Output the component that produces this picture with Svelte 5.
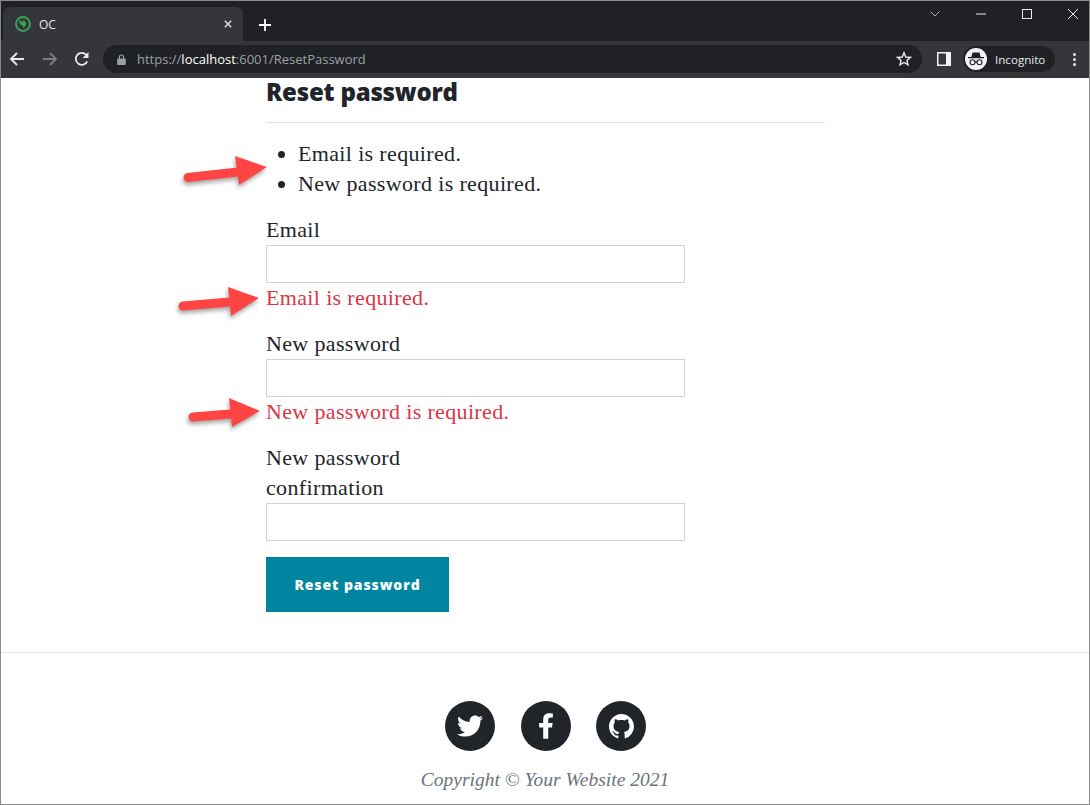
<script>
  const groups = [
    { label: 'Email', error: 'Email is required.' },
    { label: 'New password', error: 'New password is required.' },
    { label: 'New password confirmation', error: '' }
  ];
  const arrows = [
    { x1: 188, y1: 177.5, x2: 238, y2: 172, head: '235,156 267,167 239,185' },
    { x1: 183, y1: 306, x2: 230, y2: 302, head: '228,287 259,298 231,316' },
    { x1: 193, y1: 417, x2: 231, y2: 414, head: '229,398 260,411 232,427' }
  ];
</script>

<div class="window">
  <div class="titlebar">
    <div class="tab">
      <svg class="favicon" viewBox="0 0 16 16" aria-hidden="true">
        <circle cx="8" cy="8" r="7" fill="none" stroke="#34a853" stroke-width="1.8" />
        <path d="M4 4.500C6 4.800 7.300 5.800 7.800 7.400V4.600C9.600 4.800 10.800 5.800 11 7.400 11.200 9.400 9.800 11 8 11.400V9.600C6 9.500 4.300 7.500 4 4.500Z" fill="#34a853" />
      </svg>
      <span class="tab-title">OC</span>
      <svg class="tab-close" viewBox="0 0 10 10" aria-hidden="true"><path d="M1 1l8 8M9 1l-8 8" /></svg>
    </div>
    <svg class="new-tab" viewBox="0 0 12 12" aria-hidden="true"><path d="M6 0v12M0 6h12" /></svg>
    <div class="win-controls">
      <svg class="wc chevron" viewBox="0 0 10 6" aria-hidden="true"><path d="M.5.5 5 5 9.500.5" /></svg>
      <svg class="wc minimize" viewBox="0 0 10 2" aria-hidden="true"><path d="M0 1h10" /></svg>
      <svg class="wc maximize" viewBox="0 0 10 10" aria-hidden="true"><rect x=".5" y=".5" width="9" height="9" /></svg>
      <svg class="wc close" viewBox="0 0 10 10" aria-hidden="true"><path d="M0 0l10 10M10 0 0 10" /></svg>
    </div>
  </div>

  <div class="toolbar">
    <svg class="nav" viewBox="0 0 16 16" aria-hidden="true"><path d="M15 8H2M8 2 2 8l6 6" /></svg>
    <svg class="nav dim" viewBox="0 0 16 16" aria-hidden="true"><path d="M1 8h13M8 2l6 6-6 6" /></svg>
    <svg class="nav reload" viewBox="0 0 16 16" aria-hidden="true">
      <path d="M13.200 10.500A6 6 0 1 1 12.300 3.800" />
      <path class="solid" d="M14.500 1v6h-6z" />
    </svg>
    <div class="omnibox">
      <svg class="lock" viewBox="0 0 10 12" aria-hidden="true">
        <path d="M1 5h8a.8.8 0 0 1 .8.8v5.400a.8.8 0 0 1-.8.8H1a.8.8 0 0 1-.8-.8V5.800A.8.8 0 0 1 1 5z" />
        <path class="shackle" d="M2.700 5.500V3.300a2.300 2.300 0 0 1 4.600 0v2.200" />
      </svg>
      <span class="url">https://<b>localhost</b>:6001/ResetPassword</span>
      <svg class="star" viewBox="0 0 16 16" aria-hidden="true"><path d="M8 1.800 9.800 6l4.600.4-3.500 3 1.100 4.500L8 11.500l-4 2.400 1.100-4.500-3.500-3L6.200 6z" /></svg>
    </div>
    <svg class="sidepanel" viewBox="0 0 14 14" aria-hidden="true">
      <path fill-rule="evenodd" d="M0 0h14v14H0zM1.500 1.500v11H9v-11z" />
    </svg>
    <div class="profile">
      <span class="avatar">
        <svg viewBox="0 0 22 22" aria-hidden="true">
          <path d="M7.500 4.500h7l1.200 4.500H19v1.200H3V9h3.300z" />
          <circle class="glass" cx="7.500" cy="14.200" r="2.500" />
          <circle class="glass" cx="14.500" cy="14.200" r="2.500" />
          <path class="glass" d="M10 13.900h2" />
        </svg>
      </span>
      <span class="profile-name">Incognito</span>
    </div>
    <div class="kebab"><i></i><i></i><i></i></div>
  </div>

  <main>
    <h1>Reset password</h1>
    <ul>
      <li>Email is required.</li>
      <li>New password is required.</li>
    </ul>
    <form>
      {#each groups as g}
        <div class="group">
          <label>
            <span class="label-text">{g.label}</span>
            <input type="text" />
          </label>
          {#if g.error}<div class="error">{g.error}</div>{/if}
        </div>
      {/each}
      <button type="button">Reset password</button>
    </form>
  </main>

  <footer>
    <div class="social">
      <span class="circle">
        <svg class="i-tw" viewBox="0 0 512 512" aria-hidden="true"><path d="M459.37 151.716c.325 4.548.325 9.097.325 13.645 0 138.72-105.583 298.558-298.558 298.558-59.452 0-114.68-17.219-161.137-47.106 8.447.974 16.568 1.299 25.34 1.299 49.055 0 94.213-16.568 130.274-44.832-46.132-.975-84.792-31.188-98.112-72.772 6.498.974 12.995 1.624 19.818 1.624 9.421 0 18.843-1.3 27.614-3.573-48.081-9.747-84.143-51.98-84.143-102.985v-1.299c13.969 7.797 30.214 12.67 47.431 13.319-28.264-18.843-46.781-51.005-46.781-87.391 0-19.492 5.197-37.36 14.294-52.954 51.655 63.675 129.3 105.258 216.365 109.807-1.624-7.797-2.599-15.918-2.599-24.04 0-57.828 46.782-104.934 104.934-104.934 30.213 0 57.502 12.67 76.67 33.137 23.715-4.548 46.456-13.32 66.599-25.34-7.798 24.366-24.366 44.833-46.132 57.827 21.117-2.273 41.584-8.122 60.426-16.243-14.292 20.791-32.161 39.308-52.628 54.253z" /></svg>
      </span>
      <span class="circle">
        <svg class="i-fb" viewBox="0 0 320 512" aria-hidden="true"><path d="M279.14 288l14.22-92.66h-88.91v-60.13c0-25.35 12.42-50.06 52.24-50.06h40.42V6.26S260.43 0 225.36 0c-73.22 0-121.08 44.38-121.08 124.72v70.62H22.89V288h81.39v224h100.17V288z" /></svg>
      </span>
      <span class="circle">
        <svg class="i-gh" viewBox="0 0 16 16" aria-hidden="true"><path d="M8 0C3.58 0 0 3.58 0 8c0 3.54 2.29 6.53 5.47 7.59.4.07.55-.17.55-.38 0-.19-.01-.82-.01-1.49-2.01.37-2.53-.49-2.69-.94-.09-.23-.48-.94-.82-1.13-.28-.15-.68-.52-.01-.53.63-.01 1.08.58 1.23.82.72 1.21 1.87.87 2.33.66.07-.52.28-.87.51-1.07-1.78-.2-3.64-.89-3.64-3.95 0-.87.31-1.59.82-2.15-.08-.2-.36-1.02.08-2.12 0 0 .67-.21 2.2.82.64-.18 1.32-.27 2-.27.68 0 1.36.09 2 .27 1.53-1.04 2.2-.82 2.2-.82.44 1.1.16 1.92.08 2.12.51.56.82 1.27.82 2.15 0 3.07-1.87 3.75-3.65 3.95.29.25.54.73.54 1.48 0 1.07-.01 1.93-.01 2.2 0 .21.15.46.55.38A8.013 8.013 0 0016 8c0-4.42-3.58-8-8-8z" /></svg>
      </span>
    </div>
    <p class="copyright">Copyright © Your Website 2021</p>
  </footer>

  <svg class="annotations" viewBox="0 0 1090 805" aria-hidden="true">
    {#each arrows as a}
      <g class="arrow">
        <line x1={a.x1} y1={a.y1} x2={a.x2} y2={a.y2} />
        <polygon points={a.head} />
      </g>
    {/each}
  </svg>
</div>

<style>
  :global(body) { margin: 0; background: #fff; }
  .window {
    position: relative;
    box-sizing: border-box;
    width: 1090px;
    height: 805px;
    border: 1px solid #8a8a8a;
    overflow: hidden;
    font-family: "Liberation Serif", serif;
    color: #212529;
    display: flex;
    flex-direction: column;
  }
  .titlebar {
    height: 40px;
    flex: none;
    background: #202124;
    display: flex;
    align-items: flex-end;
    padding-left: 2px;
    position: relative;
  }
  .tab {
    width: 240px;
    height: 34px;
    background: #35363a;
    border-radius: 8px 8px 0 0;
    display: flex;
    align-items: center;
    box-sizing: border-box;
    padding: 0 11px 0 12px;
  }
  .favicon { width: 16px; height: 16px; flex: none; }
  .tab-title {
    margin-left: 8px;
    flex: 1;
    font: 12px "Open Sans", sans-serif;
    color: #e8eaed;
  }
  .tab-close { width: 8px; height: 8px; fill: none; stroke: #e8eaed; stroke-width: 1.6; }
  .new-tab {
    width: 12px; height: 12px;
    fill: none; stroke: #fff; stroke-width: 1.8;
    margin: 0 0 10px 16px;
  }
  .win-controls {
    margin-left: auto;
    align-self: flex-start;
    display: flex;
    align-items: center;
    height: 25px;
  }
  .wc { fill: none; stroke-width: 1; display: block; }
  .chevron { width: 10px; height: 6px; margin-right: 36px; stroke: #a8a9ab; }
  .minimize { width: 10px; height: 2px; margin-right: 36px; stroke: #e8eaed; }
  .maximize { width: 10px; height: 10px; margin-right: 36px; stroke: #e8eaed; }
  .close { width: 10px; height: 10px; margin-right: 11px; stroke: #e8eaed; }

  .toolbar {
    box-sizing: border-box;
    height: 37px;
    flex: none;
    background: #35363a;
    display: flex;
    align-items: center;
    padding: 0 0 1px 8px;
  }
  .nav {
    width: 16px; height: 16px;
    fill: none; stroke: #e8eaed; stroke-width: 1.8;
    margin-right: 16.500px;
    flex: none;
  }
  .nav.dim { stroke: #7c7d80; }
  .nav.reload { margin-right: 13px; }
  .nav .solid { fill: #e8eaed; stroke: none; }
  .omnibox {
    width: 819px;
    height: 28px;
    flex: none;
    background: #202124;
    border-radius: 14px;
    display: flex;
    align-items: center;
    padding-left: 14px;
    box-sizing: border-box;
  }
  .lock { width: 9px; height: 11px; fill: #9aa0a6; flex: none; }
  .lock .shackle { fill: none; stroke: #9aa0a6; stroke-width: 1.3; }
  .url {
    margin-left: 11px;
    font: 13px "Open Sans", sans-serif;
    color: #9aa0a6;
  }
  .url b { font-weight: 400; color: #fff; }
  .star {
    width: 16px; height: 16px;
    margin-left: auto; margin-right: 10px;
    fill: none; stroke: #e8eaed; stroke-width: 1.4;
  }
  .sidepanel { width: 14px; height: 14px; fill: #f1f3f4; margin-left: 15px; flex: none; }
  .profile {
    width: 92px;
    height: 26px;
    margin-left: 12px;
    background: #202124;
    border-radius: 13px;
    display: flex;
    align-items: center;
    flex: none;
  }
  .avatar {
    width: 22px; height: 22px;
    border-radius: 50%;
    background: #f1f3f4;
    margin-left: 2px;
    flex: none;
    display: block;
  }
  .avatar svg { display: block; width: 22px; height: 22px; fill: #202124; }
  .avatar .glass { fill: none; stroke: #202124; stroke-width: 1.1; }
  .profile-name { margin-left: 8px; font: 11.600px "Open Sans", sans-serif; color: #e8eaed; }
  .kebab {
    margin-left: 18px;
    display: flex;
    flex-direction: column;
    gap: 2px;
  }
  .kebab i { display: block; width: 3px; height: 3px; border-radius: 50%; background: #e8eaed; }

  main { margin-left: 265px; width: 559px; flex: none; }
  h1 {
    margin: 0;
    font: 800 24px/28px "Open Sans", sans-serif;
    letter-spacing: -0.2px;
    padding: 0 0 16px;
    border-bottom: 1px solid #dee2e6;
    color: #212529;
  }
  ul {
    margin: 16px 0;
    padding-left: 32px;
    line-height: 30px;
  }
  .group { width: 419px; margin-bottom: 16px; line-height: 30px; }
  .label-text { display: block; width: 160px; }
  input {
    display: block;
    box-sizing: border-box;
    width: 100%;
    height: 38px;
    border: 1px solid #ced4da;
    background: #fff;
    padding: 0;
    margin: 0;
    outline: none;
  }
  .error { color: #dc3545; }
  ul, .label-text, .error { font-size: 22px; letter-spacing: 0.35px; }
  button {
    display: block;
    width: 183px;
    height: 55px;
    border: 0;
    padding: 0;
    background: #0085a1;
    color: #fff;
    font: 800 14px "Open Sans", sans-serif;
    letter-spacing: 0.9px;
  }
  footer {
    margin-top: 40px;
    flex: 1;
    border-top: 1px solid #dee2e6;
    padding-top: 48px;
    display: flex;
    flex-direction: column;
    align-items: center;
  }
  .social { display: flex; gap: 25.500px; margin-left: 1.500px; }
  .circle {
    width: 50px; height: 50px;
    border-radius: 50%;
    background: #212529;
    display: flex;
    align-items: center;
    justify-content: center;
  }
  .circle svg { fill: #fff; display: block; }
  .i-tw { width: 26px; height: 26px; }
  .i-fb { width: 16px; height: 26px; }
  .i-gh { width: 25px; height: 25px; }
  .copyright {
    margin: 14px 0 0;
    font-size: 19.500px;
    line-height: 30px;
    font-style: italic;
    color: #6c757d;
  }
  .annotations {
    position: absolute;
    left: -1px; top: -1px;
    width: 1090px; height: 805px;
    pointer-events: none;
  }
  .arrow { filter: drop-shadow(-1px 3px 2px rgba(0,0,0,.35)); }
  .arrow line { stroke: #ff4444; stroke-width: 9; stroke-linecap: round; }
  .arrow polygon { fill: #ff4444; }
</style>
